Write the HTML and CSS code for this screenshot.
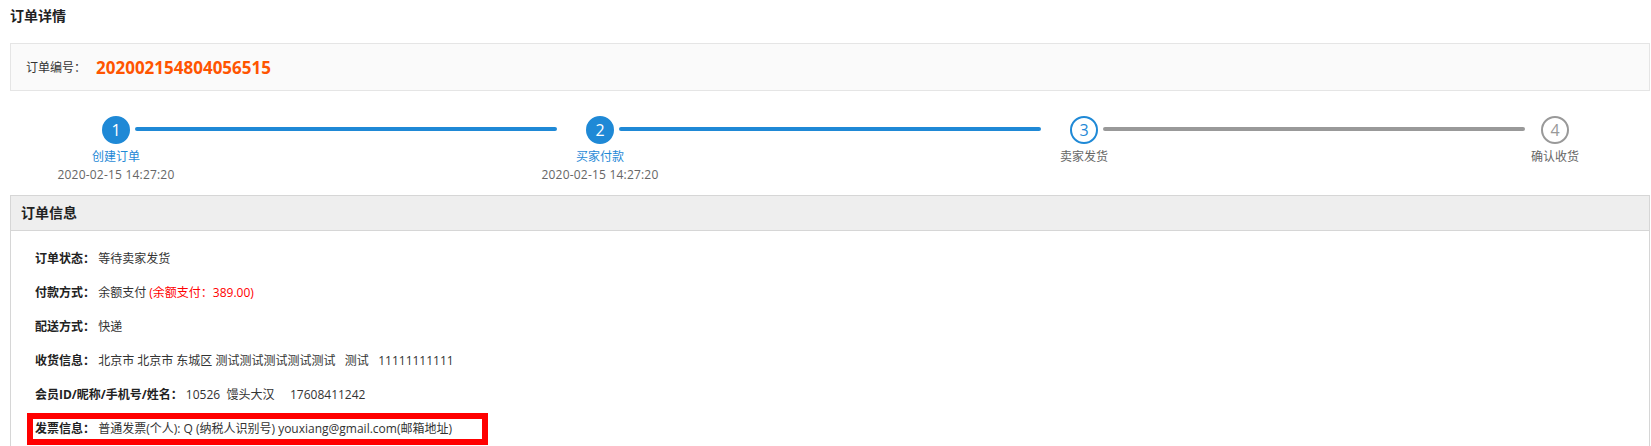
FILE: index.html
```html
<!DOCTYPE html>
<html lang="zh-CN">
<head>
  <meta charset="UTF-8">
  <title>订单详情</title>
  <link rel="stylesheet" href="styles.css">
</head>
<body>
  <div class="page">
    <h3 class="page-title">订单详情</h3>

    <div class="order-no">
      <span class="order-no-label">订单编号：</span>
      <span class="order-no-value">202002154804056515</span>
    </div>

    <div class="steps">
      <div class="step done">
        <div class="step-node">
          <span class="circle">1</span>
          <div class="step-text">
            <div class="step-title">创建订单</div>
            <div class="step-time">2020-02-15 14:27:20</div>
          </div>
        </div>
        <div class="step-line"></div>
      </div>
      <div class="step done">
        <div class="step-node">
          <span class="circle">2</span>
          <div class="step-text">
            <div class="step-title">买家付款</div>
            <div class="step-time">2020-02-15 14:27:20</div>
          </div>
        </div>
        <div class="step-line"></div>
      </div>
      <div class="step current">
        <div class="step-node">
          <span class="circle">3</span>
          <div class="step-text">
            <div class="step-title">卖家发货</div>
          </div>
        </div>
        <div class="step-line"></div>
      </div>
      <div class="step last">
        <div class="step-node">
          <span class="circle">4</span>
          <div class="step-text">
            <div class="step-title">确认收货</div>
          </div>
        </div>
      </div>
    </div>

    <div class="panel">
      <div class="panel-head">订单信息</div>
      <div class="panel-body">
        <div class="info-row"><b>订单状态：</b> 等待卖家发货</div>
        <div class="info-row"><b>付款方式：</b> 余额支付 <span class="red">(余额支付：389.00)</span></div>
        <div class="info-row"><b>配送方式：</b> 快递</div>
        <div class="info-row"><b>收货信息：</b> 北京市 北京市 东城区 测试测试测试测试测试&nbsp;&nbsp;&nbsp;测试&nbsp;&nbsp;&nbsp;11111111111</div>
        <div class="info-row"><b>会员ID/昵称/手机号/姓名：</b> 10526&nbsp;&nbsp;馒头大汉&nbsp;&nbsp;&nbsp;&nbsp;&nbsp;17608411242</div>
        <div class="info-row"><span class="mark"><b>发票信息：</b> 普通发票(个人): Q (纳税人识别号) youxiang@gmail.com(邮箱地址)</span></div>
      </div>
    </div>
  </div>
</body>
</html>
```

FILE: styles.css
```css
body {
  margin: 0;
  font-family: "Open Sans", "Noto Sans CJK SC", sans-serif;
  font-size: 12px;
  color: #333;
  background: #fff;
}

.page {
  padding: 0 1px 0 10px;
}

.page-title {
  margin: 0;
  padding-top: 6px;
  height: 37px;
  font-size: 14px;
  line-height: 20px;
  color: #222;
}

.order-no {
  display: flex;
  align-items: center;
  height: 46px;
  padding-left: 15px;
  background: #fafafa;
  border: 1px solid #e5e5e5;
}

.order-no-label {
  width: 70px;
}

.order-no-value {
  font-size: 17px;
  font-weight: bold;
  color: #ff5400;
}

/* 进度条 */
.steps {
  display: flex;
  align-items: flex-start;
  margin-top: 25px;
  padding-left: 92px;
}

.step {
  display: flex;
  align-items: flex-start;
}

.step + .step {
  margin-left: 29px;
}

.step.last {
  margin-left: 16px;
}

.step-node {
  width: 28px;
  display: flex;
  flex-direction: column;
  align-items: center;
}

.circle {
  box-sizing: border-box;
  width: 28px;
  height: 28px;
  border-radius: 50%;
  display: flex;
  align-items: center;
  justify-content: center;
  font-size: 16px;
  border: 2px solid #999;
  color: #999;
  background: #fff;
}

.step.done .circle {
  background: #1f89d6;
  border-color: #1f89d6;
  color: #fff;
}

.step.current .circle {
  border-color: #1f89d6;
  color: #1f89d6;
}

.step-text {
  width: 160px;
  margin-top: 4px;
  text-align: center;
  line-height: 18px;
  color: #666;
}

.step-time {
  letter-spacing: 0.2px;
}

.step.done .step-title {
  color: #1f89d6;
}

.step-line {
  width: 422px;
  height: 4px;
  margin: 11px 0 0 5px;
  border-radius: 2px;
  background: #999;
}

.step.done .step-line {
  background: #1f89d6;
}

/* 订单信息 */
.panel {
  margin-top: 11px;
  border: 1px solid #d6d6d6;
  height: 260px;
}

.panel-head {
  height: 34px;
  line-height: 34px;
  padding-left: 10px;
  background: #eee;
  border-bottom: 1px solid #d6d6d6;
  font-size: 14px;
  font-weight: bold;
  color: #222;
}

.panel-body {
  padding: 18px 0 0 24px;
}

.info-row {
  height: 20px;
  line-height: 20px;
  margin-bottom: 14px;
  color: #333;
  white-space: nowrap;
}

.info-row b {
  color: #222;
}

.red {
  color: #f00;
}

.mark {
  display: inline-block;
  box-sizing: border-box;
  width: 449px;
  margin-left: -2px;
  padding-left: 2px;
  outline: 6px solid #f00;
}
```
